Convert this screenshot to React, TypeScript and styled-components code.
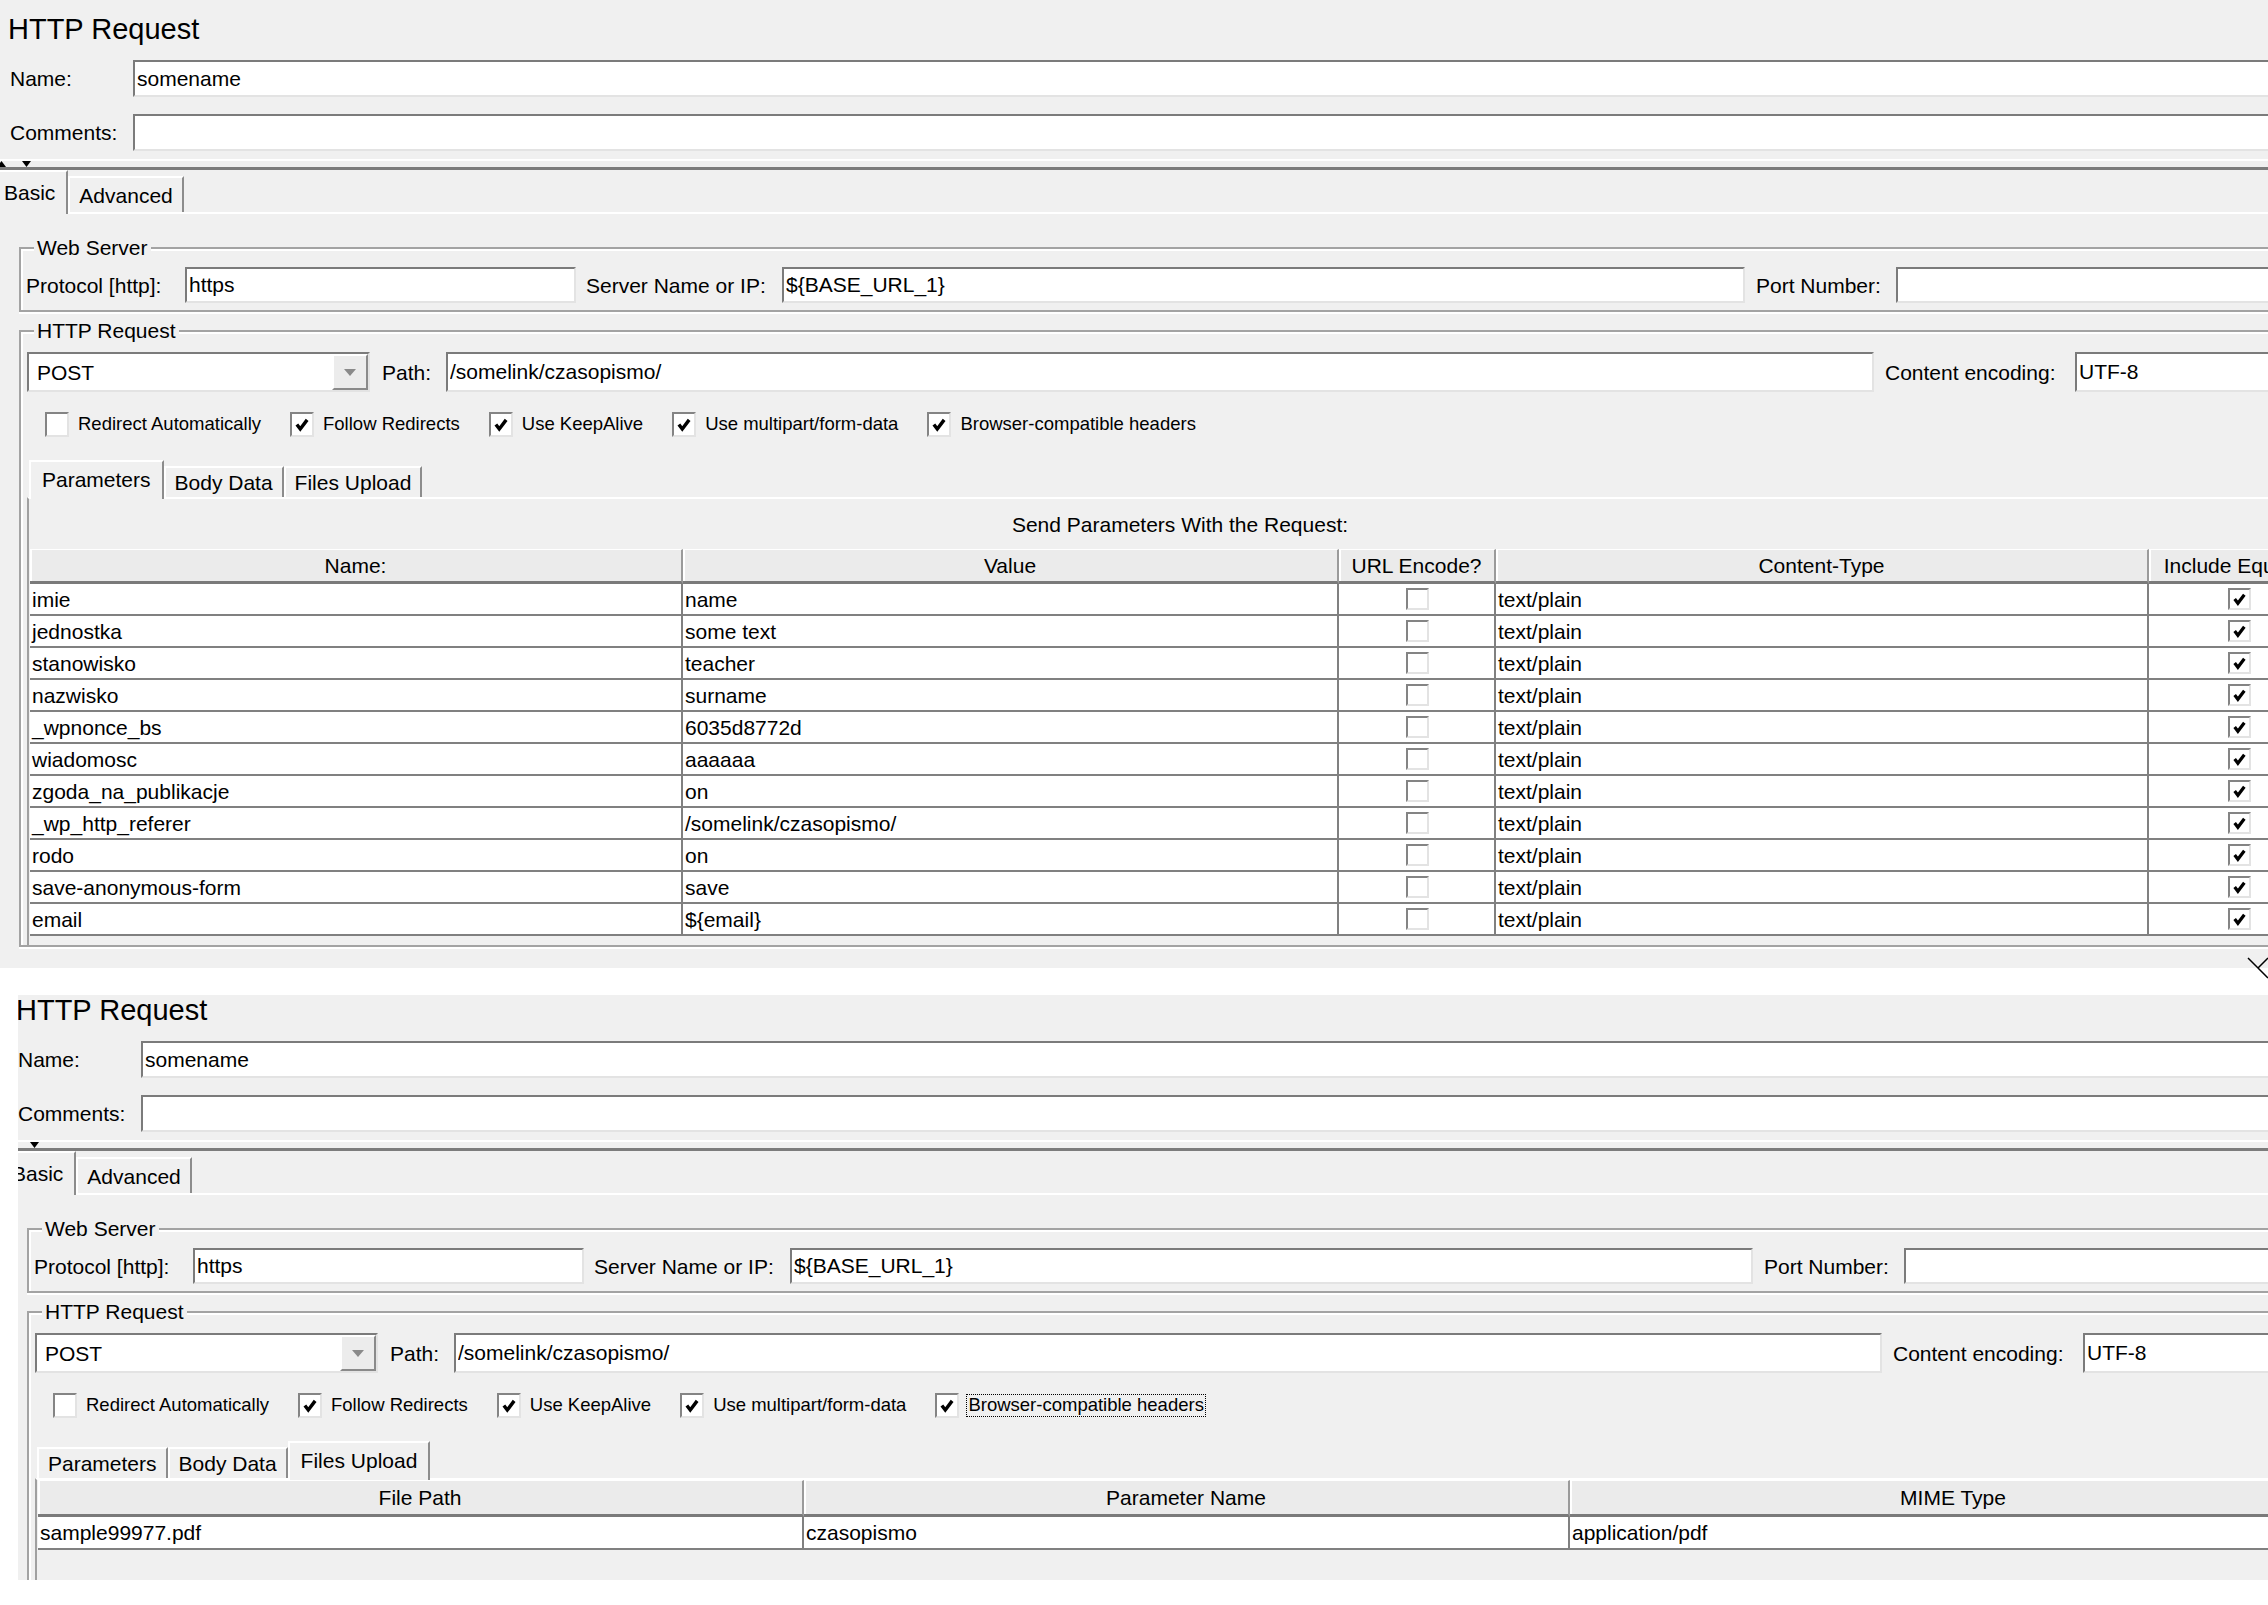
import React from 'react';
import styled, { createGlobalStyle } from 'styled-components';

const GlobalStyle = createGlobalStyle`
  *, *::before, *::after { box-sizing: border-box; }
  html, body { margin: 0; padding: 0; background: #fff; overflow: hidden; }
  body { font-family: "Liberation Sans", Arial, sans-serif; color: #000; }
`;

type Param = { name: string; value: string };

const params: Param[] = [
  { name: 'imie', value: 'name' },
  { name: 'jednostka', value: 'some text' },
  { name: 'stanowisko', value: 'teacher' },
  { name: 'nazwisko', value: 'surname' },
  { name: '_wpnonce_bs', value: '6035d8772d' },
  { name: 'wiadomosc', value: 'aaaaaa' },
  { name: 'zgoda_na_publikacje', value: 'on' },
  { name: '_wp_http_referer', value: '/somelink/czasopismo/' },
  { name: 'rodo', value: 'on' },
  { name: 'save-anonymous-form', value: 'save' },
  { name: 'email', value: '${email}' },
];

const options = [
  { label: 'Redirect Automatically', checked: false },
  { label: 'Follow Redirects', checked: true },
  { label: 'Use KeepAlive', checked: true },
  { label: 'Use multipart/form-data', checked: true },
  { label: 'Browser-compatible headers', checked: true },
];

const files = [{ path: 'sample99977.pdf', param: 'czasopismo', mime: 'application/pdf' }];

const Page = styled.div`
  position: relative;
  width: 2268px;
  height: 1605px;
  overflow: hidden;
  background: #fff;
  display: flex;
  flex-direction: column;
`;

const Shot = styled.div<{ $height: number; $left?: number; $top?: number }>`
  flex: none;
  height: ${(p) => p.$height}px;
  margin: ${(p) => p.$top ?? 0}px 0 0 ${(p) => p.$left ?? 0}px;
  overflow: hidden;
  background: #f0f0f0;
`;

const Editor = styled.div<{ $dx?: number; $dy?: number }>`
  width: 2360px;
  margin: ${(p) => p.$dy ?? 0}px 0 0 ${(p) => p.$dx ?? 0}px;
  display: flex;
  flex-direction: column;
  font-size: 21px;
  line-height: 1;
  background: #f0f0f0;
`;

const Title = styled.div`
  height: 60px;
  padding-left: 8px;
  font-size: 29px;
  line-height: 58px;
`;

const FieldRow = styled.div<{ $gap?: number; $h: number }>`
  display: flex;
  align-items: center;
  height: ${(p) => p.$h}px;
  margin-top: ${(p) => p.$gap ?? 0}px;
`;

const RowLabel = styled.span<{ $w: number; $pad?: number }>`
  flex: 0 0 ${(p) => p.$w}px;
  padding-left: ${(p) => p.$pad ?? 0}px;
  white-space: nowrap;
`;

const TextField = styled.input<{ $w?: number }>`
  flex: ${(p) => (p.$w ? `0 0 ${p.$w}px` : '1 1 0')};
  min-width: 0;
  height: 100%;
  margin: 0;
  padding: 0 0 0 2px;
  border: 2px solid;
  border-color: #7b7b7b #e3e3e3 #e3e3e3 #7b7b7b;
  background: #fff;
  font: inherit;
  color: #000;
  outline: none;
`;

const Splitter = styled.div`
  height: 19px;
  display: flex;
  flex-direction: column;
  justify-content: flex-end;
`;

const SplitGlint = styled.div`
  height: 2px;
  background: #fff;
`;

const SplitBar = styled.div`
  height: 3px;
  background: #7c7c7c;
`;

const TabStrip = styled.div<{ $h: number; $shift: number; $gap?: number }>`
  display: flex;
  align-items: flex-end;
  height: ${(p) => p.$h}px;
  margin: ${(p) => p.$gap ?? 0}px 0 0 ${(p) => p.$shift}px;
  position: relative;
  z-index: 1;
`;

const Tab = styled.div<{ $active?: boolean; $h: number }>`
  height: ${(p) => (p.$active ? p.$h + 2 : p.$h - 6)}px;
  margin-bottom: ${(p) => (p.$active ? -2 : 0)}px;
  padding: 0 ${(p) => (p.$active ? 11 : 9)}px ${(p) => (p.$active ? 2 : 0)}px;
  display: flex;
  align-items: center;
  background: #f0f0f0;
  border-top: 2px solid #fff;
  border-left: 2px solid #fff;
  border-right: 2px solid #8c8c8c;
  white-space: nowrap;
`;

const TabBody = styled.div`
  border-top: 2px solid #fff;
  display: flex;
  flex-direction: column;
`;

const Group = styled.fieldset<{ $gap: number; $padBottom: number }>`
  margin: ${(p) => p.$gap}px 0 0 19px;
  width: 2322px;
  min-width: 0;
  padding: 0 5px ${(p) => p.$padBottom}px;
  border: 2px solid #a3a3a3;
  box-shadow: inset 2px 2px 0 #fff, 0 2px 0 #fff;
`;

const Legend = styled.legend`
  margin-left: 8px;
  padding: 0 3px;
  height: 24px;
  line-height: 24px;
  background: #f0f0f0;
`;

const Combo = styled.div`
  flex: 0 0 343px;
  margin-left: 1px;
  height: 100%;
  display: flex;
  background: #fff;
  border: 2px solid;
  border-color: #7b7b7b #e3e3e3 #e3e3e3 #7b7b7b;
`;

const ComboValue = styled.span`
  flex: 1;
  display: flex;
  align-items: center;
  padding-left: 8px;
`;

const ComboButton = styled.span`
  flex: 0 0 36px;
  display: flex;
  align-items: center;
  justify-content: center;
  background: #ececec;
  border: 2px solid;
  border-color: #fff #8a8a8a #8a8a8a #fff;
`;

const CheckRow = styled.div`
  display: flex;
  align-items: center;
  height: 25px;
  margin-top: 20px;
  padding-left: 19px;
  gap: 29px;
  font-size: 18.5px;
`;

const CheckItem = styled.label`
  display: flex;
  align-items: center;
  gap: 9px;
  white-space: nowrap;
`;

const CheckText = styled.span<{ $focus?: boolean }>`
  outline: ${(p) => (p.$focus ? '1px dotted #000' : 'none')};
  outline-offset: 1px;
`;

const Box = styled.span<{ $w: number; $h: number }>`
  flex: none;
  width: ${(p) => p.$w}px;
  height: ${(p) => p.$h}px;
  display: inline-flex;
  align-items: center;
  justify-content: center;
  background: #fff;
  border: 2px solid;
  border-color: #848484 #e3e3e3 #e3e3e3 #848484;
`;

const Panel = styled.div`
  margin-left: 1px;
  height: 448px;
  padding-left: 1px;
  border-top: 2px solid #fff;
  border-left: 2px solid #a0a0a0;
  display: flex;
  flex-direction: column;
`;

const Caption = styled.div`
  width: 2300px;
  height: 50px;
  display: flex;
  align-items: center;
  justify-content: center;
  white-space: nowrap;
`;

const Grid = styled.div<{ $cols: string }>`
  display: grid;
  grid-template-columns: ${(p) => p.$cols};
  width: 2300px;
`;

const HeadCell = styled.div<{ $h: number }>`
  height: ${(p) => p.$h}px;
  display: flex;
  align-items: center;
  justify-content: center;
  background: #ebebeb;
  border-top: 1px solid #fff;
  border-right: 2px solid #9a9a9a;
  border-bottom: 3px solid #7a7a7a;
  box-shadow: inset 2px 0 0 #fff;
  white-space: nowrap;
  overflow: hidden;
`;

const Cell = styled.div<{ $center?: boolean; $h: number }>`
  height: ${(p) => p.$h}px;
  display: flex;
  align-items: center;
  justify-content: ${(p) => (p.$center ? 'center' : 'flex-start')};
  padding-left: 2px;
  background: #fff;
  border-right: 2px solid #808080;
  border-bottom: 2px solid #808080;
  white-space: nowrap;
  overflow: hidden;
`;

const CloseMark = styled.svg`
  position: absolute;
  left: 2247px;
  top: 956px;
`;

const Tick = ({ size }: { size: number }) => (
  <svg width={size} height={size} viewBox="0 0 14 14">
    <path d="M2.5 6.5 L5.5 10.5 L11.5 2.5" fill="none" stroke="#000" strokeWidth="3" strokeLinejoin="miter" />
  </svg>
);

const CheckBox = ({ checked, w, h }: { checked: boolean; w: number; h: number }) => (
  <Box $w={w} $h={h}>{checked && <Tick size={w - 8} />}</Box>
);

type EditorProps = {
  tab: 'Parameters' | 'Files Upload';
  focusLast?: boolean;
  dx?: number;
  dy?: number;
};

function HttpRequestEditor({ tab, focusLast, dx, dy }: EditorProps) {
  return (
    <Editor $dx={dx} $dy={dy}>
      <Title>HTTP Request</Title>
      <FieldRow $h={37}>
        <RowLabel $w={133} $pad={10}>Name:</RowLabel>
        <TextField readOnly value="somename" />
      </FieldRow>
      <FieldRow $h={37} $gap={17}>
        <RowLabel $w={133} $pad={10}>Comments:</RowLabel>
        <TextField readOnly value="" />
      </FieldRow>

      <Splitter>
        <SplitGlint />
        <svg width="34" height="6" viewBox="0 0 34 6">
          <polygon points="-3,6 1.5,0 6,6" fill="#000" />
          <polygon points="22,0 31,0 26.5,6" fill="#000" />
        </svg>
        <SplitBar />
      </Splitter>

      <TabStrip $h={42} $shift={-9}>
        <Tab $active $h={42}>Basic</Tab>
        <Tab $h={42}>Advanced</Tab>
      </TabStrip>

      <TabBody>
        <Group $gap={22} $padBottom={7}>
          <Legend>Web Server</Legend>
          <FieldRow $h={36} $gap={7}>
            <RowLabel $w={159}>Protocol [http]:</RowLabel>
            <TextField $w={391} readOnly value="https" />
            <RowLabel $w={206} $pad={10}>Server Name or IP:</RowLabel>
            <TextField $w={963} readOnly value="${BASE_URL_1}" />
            <RowLabel $w={151} $pad={11}>Port Number:</RowLabel>
            <TextField readOnly value="" />
          </FieldRow>
        </Group>

        <Group $gap={7} $padBottom={0}>
          <Legend>HTTP Request</Legend>
          <FieldRow $h={40} $gap={9}>
            <Combo>
              <ComboValue>POST</ComboValue>
              <ComboButton>
                <svg width="12" height="7" viewBox="0 0 12 7">
                  <polygon points="0,0 12,0 6,7" fill="#8a8a8a" />
                </svg>
              </ComboButton>
            </Combo>
            <RowLabel $w={76} $pad={12}>Path:</RowLabel>
            <TextField $w={1428} readOnly value="/somelink/czasopismo/" />
            <RowLabel $w={201} $pad={11}>Content encoding:</RowLabel>
            <TextField readOnly value="UTF-8" />
          </FieldRow>

          <CheckRow>
            {options.map((o, i) => (
              <CheckItem key={o.label}>
                <CheckBox checked={o.checked} w={24} h={25} />
                <CheckText $focus={focusLast && i === options.length - 1}>{o.label}</CheckText>
              </CheckItem>
            ))}
          </CheckRow>

          <TabStrip $h={37} $shift={3} $gap={23}>
            {['Parameters', 'Body Data', 'Files Upload'].map((t) => (
              <Tab key={t} $active={t === tab} $h={37}>
                {t}
              </Tab>
            ))}
          </TabStrip>

          <Panel>
            {tab === 'Parameters' ? (
              <>
                <Caption>Send Parameters With the Request:</Caption>
                <Grid $cols="653px 656px 157px 653px 181px">
                  <HeadCell $h={35}>Name:</HeadCell>
                  <HeadCell $h={35}>Value</HeadCell>
                  <HeadCell $h={35}>URL Encode?</HeadCell>
                  <HeadCell $h={35}>Content-Type</HeadCell>
                  <HeadCell $h={35}>Include Equals?</HeadCell>
                  {params.map((p) => (
                    <React.Fragment key={p.name}>
                      <Cell $h={32}>{p.name}</Cell>
                      <Cell $h={32}>{p.value}</Cell>
                      <Cell $h={32} $center>
                        <CheckBox checked={false} w={23} h={22} />
                      </Cell>
                      <Cell $h={32}>text/plain</Cell>
                      <Cell $h={32} $center>
                        <CheckBox checked w={23} h={22} />
                      </Cell>
                    </React.Fragment>
                  ))}
                </Grid>
              </>
            ) : (
              <Grid $cols="766px 766px 768px">
                <HeadCell $h={37}>File Path</HeadCell>
                <HeadCell $h={37}>Parameter Name</HeadCell>
                <HeadCell $h={37}>MIME Type</HeadCell>
                {files.map((f) => (
                  <React.Fragment key={f.path}>
                    <Cell $h={33}>{f.path}</Cell>
                    <Cell $h={33}>{f.param}</Cell>
                    <Cell $h={33}>{f.mime}</Cell>
                  </React.Fragment>
                ))}
              </Grid>
            )}
          </Panel>
        </Group>
      </TabBody>
    </Editor>
  );
}

export default function App() {
  return (
    <Page>
      <GlobalStyle />
      <Shot $height={968}>
        <HttpRequestEditor tab="Parameters" />
      </Shot>
      <Shot $height={585} $top={27} $left={18}>
        <HttpRequestEditor tab="Files Upload" focusLast dx={-10} dy={-14} />
      </Shot>
      <CloseMark width="22" height="24" viewBox="0 0 22 24">
        <path d="M1 2 L11 12 L21 2 M11 12 L21 22" fill="none" stroke="#000" strokeWidth="1.5" />
      </CloseMark>
    </Page>
  );
}
